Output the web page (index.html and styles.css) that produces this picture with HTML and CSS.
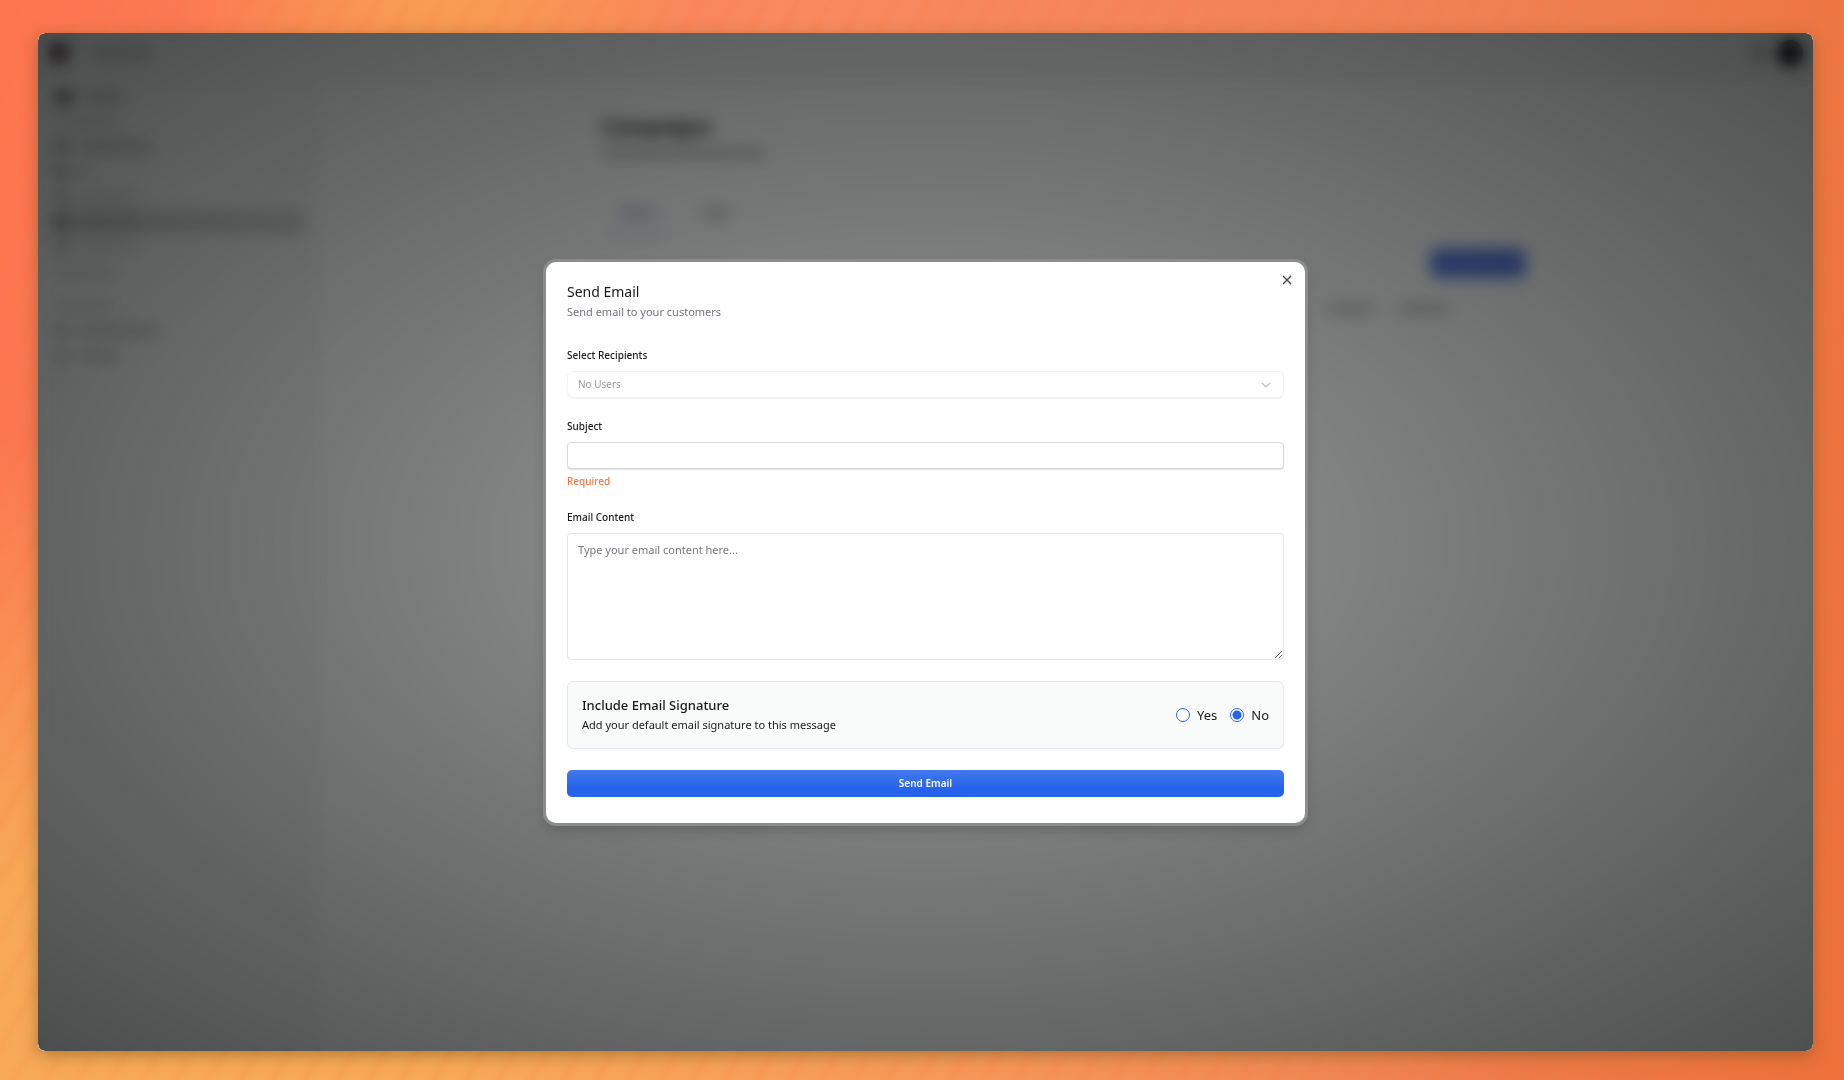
FILE: index.html
```
<!doctype html>
<html lang="en">
<head>
    <meta charset="utf-8">
    <meta name="viewport" content="width=device-width, initial-scale=1.0">
    <title>Campaigns - Send Email</title>
    <link rel="stylesheet" href="styles.css">
</head>
<body>
    <div class="window">
        <!-- Campaigns page, sits behind the dialog -->
        <div class="app" aria-hidden="true">
            <div class="topbar">
                <span class="logo"></span>
                <span class="bar w60"></span>
                <span class="dot push"></span>
                <span class="avatar"></span>
            </div>
            <div class="sidebar">
                <div class="item"><i class="dot big"></i><span class="bar w40"></span></div>
                <div class="item"><span class="bar w60 faint"></span></div>
                <div class="item"><i class="dot"></i><span class="bar w70"></span></div>
                <div class="item"><i class="dot"></i><span class="bar w10"></span></div>
                <div class="item"><i class="dot soft"></i><span class="bar w60 faint"></span></div>
                <div class="item active"><i class="dot"></i><span class="bar w60"></span></div>
                <div class="item"><i class="dot soft"></i><span class="bar w60 faint"></span></div>
                <div class="item"><span class="bar w60 faint"></span></div>
                <div class="item section"><span class="bar w60 faint"></span></div>
                <div class="item"><i class="dot soft"></i><span class="bar w80"></span></div>
                <div class="item"><i class="dot soft"></i><span class="bar w40"></span></div>
            </div>
            <div class="main">
                <div class="page">
                    <h1>Campaigns</h1>
                    <span class="bar subtitle"></span>
                    <div class="tabs">
                        <span class="tab current"><span class="bar w40"></span></span>
                        <span class="tab"><span class="bar w30"></span></span>
                    </div>
                    <span class="new"></span>
                    <div class="list">
                        <span class="bar w50"></span>
                        <span class="bar w50"></span>
                    </div>
                </div>
            </div>
        </div>

        <div class="overlay">
            <form class="modal" role="dialog" aria-labelledby="title">
                <button class="close" type="button" aria-label="Close">
                    <svg viewBox="0 0 10 10" width="10" height="10"><path d="M1 1l8 8M9 1L1 9" fill="none" stroke="#3f4247" stroke-width="1.3"/></svg>
                </button>
                <h2 id="title">Send Email</h2>
                <p class="desc">Send email to your customers</p>

                <div class="field">
                    <label for="recipients">Select Recipients</label>
                    <div class="selectbox">
                        <select id="recipients" disabled>
                            <option>No Users</option>
                        </select>
                        <svg class="chevron" viewBox="0 0 10 10" width="10" height="10"><path d="M1 3l4 4 4-4" fill="none" stroke="#b9bcc2" stroke-width="1.2"/></svg>
                    </div>
                </div>

                <div class="field">
                    <label for="subject">Subject</label>
                    <input id="subject" class="text" type="text">
                    <p class="error">Required</p>
                </div>

                <div class="field">
                    <label for="content">Email Content</label>
                    <textarea id="content" placeholder="Type your email content here..."></textarea>
                </div>

                <div class="signature">
                    <div>
                        <h3>Include Email Signature</h3>
                        <p>Add your default email signature to this message</p>
                    </div>
                    <div class="choices">
                        <label><input type="radio" name="signature" value="yes">Yes</label>
                        <label><input type="radio" name="signature" value="no" checked>No</label>
                    </div>
                </div>

                <button class="send" type="submit">Send Email</button>
            </form>
        </div>
    </div>
</body>
</html>
```
FILE: styles.css
```
* {
    box-sizing: border-box;
}
html, body {
    margin: 0;
    padding: 0;
}
h1, h2, h3, p {
    margin: 0;
    font-weight: normal;
}
body {
    height: 100vh;
    padding: 33px 31px 29px 38px;
    font-family: "Noto Sans", "Open Sans", sans-serif;
    color: #17181c;
    background:
        repeating-linear-gradient(120deg, rgba(255, 110, 50, 0) 0 12px, rgba(255, 110, 50, 0.1) 20px, rgba(255, 110, 50, 0) 28px),
        radial-gradient(ellipse 260px 120px at 24% 0, #f7a052, rgba(247, 160, 82, 0)),
        radial-gradient(ellipse 1500px 640px at 0 100%, #f7a957 30%, rgba(247, 169, 87, 0)),
        linear-gradient(100deg, #fc754f 0%, #f98a60 40%, #ee8052 75%, #ec713a 100%);
}
.window {
    position: relative;
    height: 100%;
    border-radius: 7px;
    overflow: hidden;
    box-shadow: 0 4px 16px rgba(110, 80, 20, 0.5);
}

/* page behind the dialog */
.app {
    height: 100%;
    display: grid;
    grid-template-columns: 282px 1fr;
    grid-template-rows: 48px 1fr;
    border-radius: 7px;
    background-color: white;
}
.topbar {
    grid-column: 1 / 3;
    display: flex;
    align-items: center;
    padding: 0 10px 8px 11px;
    gap: 24px;
    border-radius: 7px 7px 0 0;
    background-color: #f6f6f6;
    border-bottom: 1px solid #e4e4e4;
}
.sidebar {
    padding: 4px 14px 0 12px;
    background-color: #f8f8f8;
    border-right: 1px solid #eeeeee;
}
.item {
    display: flex;
    align-items: center;
    height: 24px;
    margin-bottom: 1px;
    padding: 0 7px;
    gap: 12px;
    border-radius: 5px;
}
.active {
    background-color: #d4d4d4;
}
.section {
    margin-top: 10px;
}
.bar {
    display: block;
    height: 8px;
    border-radius: 4px;
    background-color: #b8b8b8;
}
.faint {
    background-color: #d6d6d6;
}
.w10 { width: 10px; }
.w30 { width: 30px; }
.w40 { width: 40px; }
.w50 { width: 50px; }
.w60 { width: 60px; }
.w70 { width: 70px; }
.w80 { width: 80px; }
.dot {
    width: 10px;
    height: 10px;
    border-radius: 50%;
    background-color: #555555;
}
.big {
    width: 14px;
    height: 14px;
    background-color: #333333;
}
.soft {
    background-color: #888888;
}
.push {
    margin-left: auto;
}
.logo {
    width: 20px;
    height: 20px;
    border-radius: 50%;
    background-color: #50303c;
}
.avatar {
    width: 26px;
    height: 26px;
    margin-left: -10px;
    border-radius: 50%;
    background-color: #05050c;
}
.main {
    padding: 32px 50px 32px 44px;
}
.page {
    display: flex;
    flex-direction: column;
    max-width: 925px;
    width: 100%;
    margin: 0 auto;
}
.page h1 {
    font-size: 20px;
    line-height: 28px;
    font-weight: bold;
}
.subtitle {
    width: 165px;
    margin-top: 8px;
    background-color: #bbbbbb;
}
.tabs {
    display: flex;
    gap: 28px;
    padding-left: 8px;
    margin-top: 42px;
}
.tab {
    padding: 10px 8px 16px;
}
.current {
    border-bottom: 3px solid #b4bfe4;
}
.current .bar {
    background-color: #b9c1dc;
}
.new {
    align-self: flex-end;
    width: 96px;
    height: 30px;
    margin-top: 12px;
    border-radius: 8px;
    background-color: #5b80e8;
}
.list {
    display: flex;
    justify-content: flex-end;
    gap: 24px;
    height: 336px;
    margin-top: 13px;
    padding: 13px 76px;
    border: 1px solid #f2f2f2;
}

/* dimmed layer */
.overlay {
    position: absolute;
    inset: 0;
    display: flex;
    align-items: center;
    justify-content: center;
    padding: 20px;
    border-radius: 7px;
    backdrop-filter: blur(8px);
    background: radial-gradient(ellipse farthest-corner, rgba(2, 5, 3, 0.49) 30%, rgba(2, 5, 3, 0.55) 50%, rgba(2, 6, 4, 0.7) 100%);
}
.modal {
    position: relative;
    width: 100%;
    max-width: 759px;
    padding: 20px 21px 26px;
    border-radius: 10px;
    background-color: white;
    box-shadow: 0 0 0 3px #8b8c8f, 0 6px 14px rgba(0, 0, 0, 0.2);
}
.close {
    position: absolute;
    top: 11px;
    right: 11px;
    display: flex;
    padding: 2px;
    border: none;
    background: none;
}
.modal h2 {
    font-size: 14px;
    line-height: 20px;
}
.desc {
    font-size: 11px;
    line-height: 20px;
    color: #71747a;
}
.field {
    display: flex;
    flex-direction: column;
    margin-top: 20px;
}
.desc + .field {
    margin-top: 25px;
}
.field label {
    margin-bottom: 8px;
    font-size: 10px;
    line-height: 16px;
    font-weight: 500;
}
.selectbox {
    position: relative;
    display: flex;
}
select, .text, textarea {
    width: 100%;
    border: 1px solid #e2e5ea;
    border-radius: 4px;
    background-color: white;
    font-family: inherit;
    font-size: 11px;
    outline: none;
}
select {
    height: 27px;
    padding: 0 10px;
    appearance: none;
    border-color: #f1f3f3;
    border-radius: 6px;
    box-shadow: 0 1px 1px #f3f5f5;
    font-size: 10px;
    color: #94979c;
    opacity: 1;
}
.chevron {
    position: absolute;
    top: 9px;
    right: 13px;
}
.text {
    height: 27px;
    padding: 0 10px;
    border-color: #d5d9df;
    box-shadow: 0 1px 1px #dfe4ea;
}
.error {
    margin-top: 4px;
    font-size: 10px;
    line-height: 16px;
    font-weight: 500;
    color: #f47643;
}
textarea {
    display: block;
    height: 127px;
    padding: 8px 10px;
    line-height: 16px;
    resize: vertical;
}
textarea::placeholder {
    color: #75787c;
}
.signature {
    display: flex;
    align-items: center;
    justify-content: space-between;
    margin-top: 21px;
    padding: 13px 14px;
    border: 1px solid #e4e7ee;
    border-radius: 6px;
    background-color: #f9fbfa;
}
.signature h3 {
    font-size: 13px;
    line-height: 20px;
    font-weight: 500;
}
.signature p {
    font-size: 11px;
    line-height: 20px;
}
.choices {
    display: flex;
    gap: 13px;
}
.choices label {
    display: flex;
    align-items: center;
    gap: 7px;
    font-size: 13px;
    line-height: 20px;
}
.choices input {
    appearance: none;
    width: 14px;
    height: 14px;
    margin: 0;
    border: 1px solid #2b67e8;
    border-radius: 50%;
    background-color: white;
}
.choices input:checked {
    background: radial-gradient(circle, #2563eb 4px, white 5px);
}
.send {
    display: block;
    width: 100%;
    height: 27px;
    margin-top: 21px;
    border: none;
    border-radius: 5px;
    background: linear-gradient(#4379ee, #2563eb 70%);
    font-family: inherit;
    font-size: 10px;
    font-weight: 600;
    color: white;
}
```
